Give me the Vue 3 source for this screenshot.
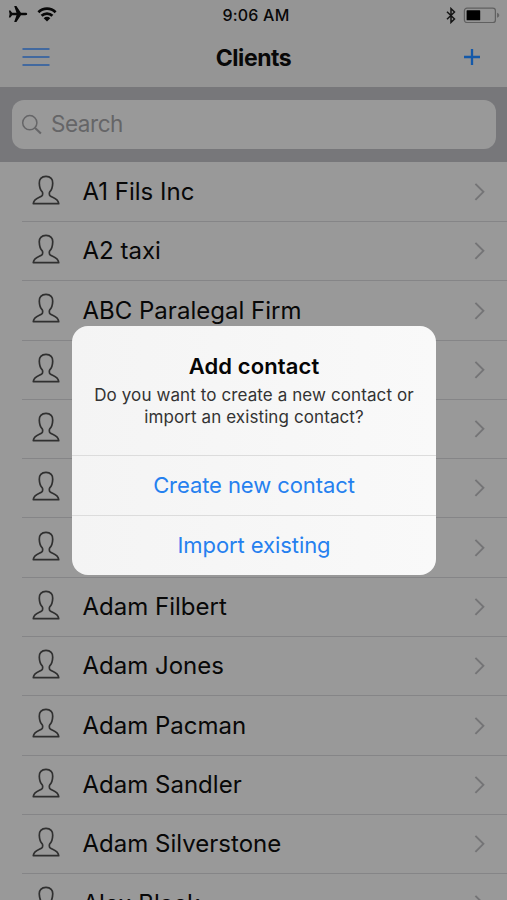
<script setup>
const clients = [
  'A1 Fils Inc', 'A2 taxi', 'ABC Paralegal Firm', '', '', '', '',
  'Adam Filbert', 'Adam Jones', 'Adam Pacman', 'Adam Sandler',
  'Adam Silverstone', 'Alex Black',
]
</script>

<template>
  <div class="screen">
    <header class="top">
      <div class="status">
        <div class="signal">
          <svg width="20" height="18" viewBox="0 0 20 18"><path d="M19.2 9c0-.8-.8-1.2-1.8-1.2h-4.5L8.4 1H6.2l2.3 6.8H4.1L2.4 5.5H.9L1.6 9l-.7 3.5h1.5l1.7-2.3h4.4L6.2 17h2.2l4.5-6.8h4.5c1 0 1.8-.4 1.8-1.2z" fill="#080808" /></svg>
          <svg class="wifi" width="20" height="16" viewBox="0 0 20 16" fill="none" stroke="#080808" stroke-width="2.7"><path d="M1.4 6.2a12.2 12.2 0 0 1 17.2 0M4.6 9.8a7.6 7.6 0 0 1 10.8 0" /><path d="M10 15.4l-3.3-3.2a4.6 4.6 0 0 1 6.6 0z" fill="#080808" stroke="none" /></svg>
        </div>
        <div class="time">9:06 AM</div>
        <div class="power">
          <svg width="10" height="17" viewBox="0 0 10 17" fill="none" stroke="#151515" stroke-width="1.5"><path d="M1 4.7l7.5 7.3L5 15.4V1.6L8.5 5 1 12.3" /></svg>
          <svg class="battery" width="37" height="17" viewBox="0 0 37 17"><rect x="1.4" y="1.1" width="31" height="14.4" rx="2.6" fill="none" stroke="#606060" stroke-width="1.2" /><rect x="3.6" y="3.3" width="13.6" height="10" rx=".6" fill="#000" /><path d="M34 5.8c3 .7 3 4.3 0 5z" fill="#666" /></svg>
        </div>
      </div>
      <nav class="nav">
        <svg width="28" height="20" viewBox="0 0 28 20" stroke="#42699f" stroke-width="1.8"><path d="M.5 2h27M.5 10h27M.5 18h27" /></svg>
        <h1>Clients</h1>
        <svg class="plus" width="18" height="18" viewBox="0 0 18 18" stroke="#1459a9" stroke-width="2.3"><path d="M1 9h16M9 1v16" /></svg>
      </nav>
    </header>
    <div class="searchbar">
      <div class="field">
        <svg width="22" height="22" viewBox="0 0 22 22" fill="none" stroke="#656567"><circle cx="8.8" cy="8.7" r="7.1" stroke-width="1.5" /><path d="M13.8 13.8l6.1 5.8" stroke-width="2.1" /></svg>
        <span>Search</span>
      </div>
    </div>
    <ul class="list">
      <li v-for="(name, i) in clients" :key="i">
        <svg class="person" width="28" height="31" viewBox="0 0 28 31" fill="none" stroke="#303030" stroke-width="1.7" stroke-linejoin="round"><path d="M14 1.4c-4.6 0-7 2.9-6.7 6.8.1 3.1.8 6.4 2.8 8.4.8.8.8 3.5-.2 4.3-2.3 1.8-8.1 2.2-8.6 7.8h25.4c-.5-5.6-6.3-6-8.6-7.8-1-.8-1-3.5-.2-4.3 2-2 2.7-5.3 2.8-8.4.3-3.9-2.1-6.8-6.7-6.8z" /></svg>
        <div class="row">
          <span>{{ name }}</span>
          <svg width="12" height="18" viewBox="0 0 12 18" fill="none" stroke="#747476" stroke-width="1.9"><path d="M1.4 .8l8 8-8 8" /></svg>
        </div>
      </li>
    </ul>
    <div class="dialog" role="dialog">
      <div class="message">
        <h2>Add contact</h2>
        <p>Do you want to create a new contact or<br />import an existing contact?</p>
      </div>
      <button>Create new contact</button>
      <button>Import existing</button>
    </div>
  </div>
</template>

<style>
body { background: #999; overflow: hidden; }
</style>

<style scoped>
.screen { position: relative; width: 507px; height: 900px; overflow: hidden; background: #999; font-family: Inter, "Liberation Sans", sans-serif; color: #080808; }
svg { display: block; flex: none; }
.top { height: 87px; background: #959595; }
.status { display: grid; grid-template-columns: 1fr auto 1fr; height: 30px; padding: 0 7px 0 8px; align-items: center; box-sizing: border-box; }
.signal, .power { display: flex; align-items: center; }
.signal { gap: 9px; padding-bottom: 2px; }
.power { justify-content: flex-end; gap: 7px; }
.time { font-size: 16px; line-height: 30px; font-weight: 500; letter-spacing: .2px; padding-left: 4px; }
.nav { display: grid; grid-template-columns: 1fr auto 1fr; align-items: center; height: 54px; padding: 0 26px 0 22px; }
.nav h1 { margin: 2px 0 0; padding-left: 4px; font-size: 23px; font-weight: 700; letter-spacing: -.45px; line-height: 30px; }
.plus { justify-self: end; }
.searchbar { height: 75.3px; padding: 13px 11px 12.8px 12px; box-sizing: border-box; background: #77777a; }
.field { display: flex; align-items: center; height: 49.3px; border-radius: 12px; background: #999; padding-left: 9px; gap: 8px; box-sizing: border-box; }
.field span { font-size: 22.5px; line-height: 30px; color: #656567; letter-spacing: -.45px; padding-bottom: 2px; }
.list { list-style: none; margin: 0; padding: .5px 0 0; }
li { display: flex; height: 59.3px; padding-left: 22px; background: linear-gradient(#858587, #858587) 22px 100% / 100% 1.2px no-repeat; }
.person { margin: 12px 0 0 10px; }
.row { flex: 1; display: flex; justify-content: space-between; align-items: center; padding: 0 21px 1px 0; margin-left: 22.4px; font-size: 24px; line-height: 30px; letter-spacing: .02px; }
.row span { white-space: nowrap; }
.dialog { position: absolute; left: 72px; top: 325.5px; width: 364px; height: 249.5px; border-radius: 16px; overflow: hidden; background: linear-gradient(90deg, #f4f4f4, #f9f9f9); text-align: center; }
.message { height: 129.5px; padding-top: 26.5px; box-sizing: border-box; }
.dialog h2 { margin: 0; font-size: 22px; line-height: 28px; font-weight: 600; letter-spacing: .1px; color: #050505; }
.dialog p { margin: 5px 0 0; font-size: 17px; line-height: 21.7px; letter-spacing: .1px; color: #333; white-space: nowrap; }
.dialog button { display: block; width: 100%; height: 60px; border: 0; border-top: 1.2px solid #dcdcdc; background: none; padding: 0 0 1px; font: 22px/30px Inter, "Liberation Sans", sans-serif; letter-spacing: -.08px; color: #2580ef; }
</style>
